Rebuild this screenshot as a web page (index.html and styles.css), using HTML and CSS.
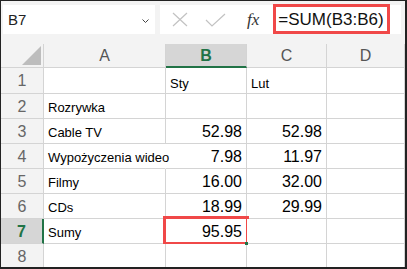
FILE: index.html
```html
<!DOCTYPE html>
<html lang="pl">
<head>
  <meta charset="UTF-8" />
  <meta name="viewport" content="width=device-width, initial-scale=1.0"/>
  <title>Sumy</title>
  <link rel="stylesheet" href="styles.css">
</head>
<body>
  <div class="frame">
    <div class="toolbar">
      <div class="name-box">
        <span>B7</span>
        <svg class="chevron" width="7" height="4" viewBox="0 0 7 4"><path d="M0.5 0.5 L3.5 3.5 L6.5 0.5" fill="none" stroke="#444" stroke-width="1"/></svg>
      </div>
      <div class="formula-box">
        <svg class="icon-x" width="16" height="15" viewBox="0 0 16 15"><path d="M1 1 L15 14 M15 1 L1 14" stroke="#c2c2c2" stroke-width="1.2" fill="none"/></svg>
        <svg class="icon-check" width="21" height="14" viewBox="0 0 21 14"><path d="M1 7 L7 13 L20 1" stroke="#c2c2c2" stroke-width="1.2" fill="none"/></svg>
        <span class="fx">fx</span>
        <span class="formula">=SUM(B3:B6)</span>
      </div>
    </div>

    <div class="sheet">
      <div class="corner"><div class="triangle"></div></div>
      <div class="col-head">A</div>
      <div class="col-head active">B</div>
      <div class="col-head">C</div>
      <div class="col-head">D</div>

      <div class="row-head">1</div>
      <div class="cell"></div>
      <div class="cell small">Sty</div>
      <div class="cell small">Lut</div>
      <div class="cell"></div>

      <div class="row-head">2</div>
      <div class="cell">Rozrywka</div>
      <div class="cell"></div>
      <div class="cell"></div>
      <div class="cell"></div>

      <div class="row-head">3</div>
      <div class="cell">Cable TV</div>
      <div class="cell num">52.98</div>
      <div class="cell num">52.98</div>
      <div class="cell"></div>

      <div class="row-head">4</div>
      <div class="cell spill">Wypożyczenia wideo</div>
      <div class="cell num">7.98</div>
      <div class="cell num">11.97</div>
      <div class="cell"></div>

      <div class="row-head">5</div>
      <div class="cell">Filmy</div>
      <div class="cell num">16.00</div>
      <div class="cell num">32.00</div>
      <div class="cell"></div>

      <div class="row-head">6</div>
      <div class="cell">CDs</div>
      <div class="cell num">18.99</div>
      <div class="cell num">29.99</div>
      <div class="cell"></div>

      <div class="row-head active">7</div>
      <div class="cell">Sumy</div>
      <div class="cell num selected">95.95</div>
      <div class="cell"></div>
      <div class="cell"></div>

      <div class="row-head">8</div>
      <div class="cell"></div>
      <div class="cell"></div>
      <div class="cell"></div>
      <div class="cell"></div>
    </div>
  </div>
</body>
</html>
```

FILE: styles.css
```css
body {
  margin: 0;
  font-family: "Liberation Sans", Arial, sans-serif;
}
.frame {
  width: 407px;
  height: 269px;
  box-sizing: border-box;
  border-top: 1px solid #222;
  border-left: 1px solid #222;
  border-right: 2px solid #222;
  border-bottom: 2px solid #222;
  background-color: #f3f3f3;
  overflow: hidden;
}
.toolbar {
  display: flex;
  gap: 5px;
  height: 43px;
  box-sizing: border-box;
  padding: 4px 4px 0 2px;
}
.name-box {
  width: 152px;
  height: 29px;
  background-color: #fff;
  display: flex;
  align-items: center;
  justify-content: space-between;
  padding: 0 6px 0 5px;
  box-sizing: border-box;
  font-size: 15px;
  color: #222;
}
.chevron {
  margin-top: 2px;
}
.formula-box {
  flex: 1;
  height: 29px;
  background-color: #fff;
  display: flex;
  align-items: center;
  padding-left: 12px;
}
.icon-check {
  margin-left: 17px;
}
.fx {
  font-family: "Liberation Serif", serif;
  font-style: italic;
  font-size: 17px;
  color: #333;
  margin-left: 21px;
}
.formula {
  margin-left: 14px;
  height: 30px;
  margin-top: -1px;
  box-sizing: border-box;
  border: 3px solid #f04848;
  padding: 0 3px 0 2px;
  font-size: 17px;
  line-height: 25px;
  color: #111;
}
.sheet {
  display: grid;
  grid-template-columns: 43px 122px 81px 80px 1fr;
  grid-template-rows: 24px 26px repeat(7, 25px);
}
.sheet > div {
  box-sizing: border-box;
  border-right: 1px solid #d4d4d4;
  border-bottom: 1px solid #d4d4d4;
}
.corner {
  position: relative;
  background-color: #f3f3f3;
}
.triangle {
  position: absolute;
  right: 2px;
  bottom: 2px;
  width: 19px;
  height: 19px;
  background-color: #bdbdbd;
  clip-path: polygon(100% 0, 100% 100%, 0 100%);
}
.col-head {
  background-color: #f3f3f3;
  color: #555;
  font-size: 16px;
  text-align: center;
  line-height: 24px;
}
.col-head.active {
  background-color: #d6d6d6;
  color: #217346;
  font-weight: bold;
  border-bottom: 2px solid #217346;
}
.row-head {
  background-color: #f3f3f3;
  color: #666;
  font-size: 16px;
  text-align: center;
  display: flex;
  align-items: center;
  justify-content: center;
  padding-top: 1px;
}
.row-head.active {
  background-color: #d6d6d6;
  color: #217346;
  font-weight: bold;
  border-right: 2px solid #217346;
}
.cell {
  background-color: #fff;
  font-size: 13px;
  color: #000;
  padding: 0 4px 3px 4px;
  display: flex;
  align-items: flex-end;
  white-space: nowrap;
  position: relative;
}
.sheet > .cell.spill {
  border-right-color: #fff;
  z-index: 1;
}
.cell.small {
  font-size: 13px;
  padding-bottom: 2px;
}
.cell.num {
  font-size: 16px;
  justify-content: flex-end;
  padding-bottom: 2px;
}
.cell.selected::after {
  content: "";
  position: absolute;
  top: -3px;
  left: -3px;
  right: -3px;
  bottom: -2px;
  border: 3px solid #f04848;
}
.cell.selected::before {
  content: "";
  position: absolute;
  right: -2px;
  bottom: -2px;
  width: 3px;
  height: 3px;
  background-color: #217346;
  z-index: 1;
}
```
